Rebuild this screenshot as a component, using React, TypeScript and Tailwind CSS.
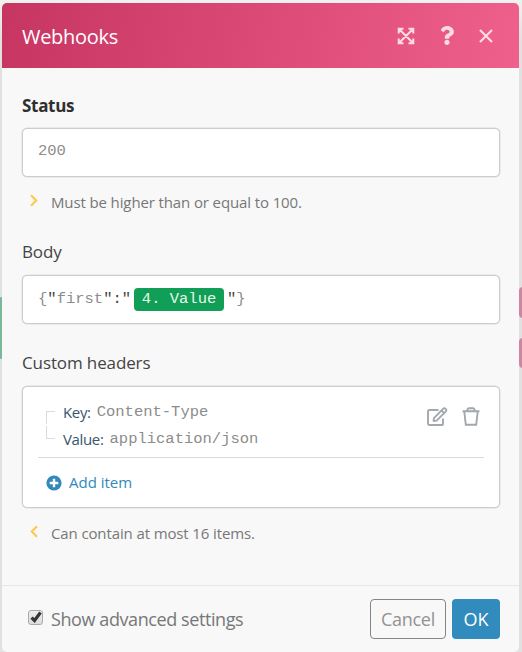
import type { ReactNode } from 'react';
import { FaQuestion } from 'react-icons/fa';

const box = 'rounded-[5px] border border-[#cdcdcd] bg-white shadow-[0_0_0_0.5px_#dcdcdc]';
const mono = "font-['Liberation_Mono','Courier_New',monospace] text-[15.5px] text-[#8c8c8c]";

function ExpandIcon() {
  return (
    <svg width="18" height="18" viewBox="0 0 18 18" fill="none" stroke="currentColor" strokeWidth="2">
      <path d="M1.700 6.500V1.700h4.800M11.500 1.700h4.800v4.800M16.300 11.500v4.800h-4.800M6.500 16.300H1.700v-4.800M2 2l14 14M16 2L2 16" />
      <path fill="currentColor" stroke="none" d="M1 1h5L1 6zM17 1v5l-5-5zM17 17h-5l5-5zM1 17v-5l5 5z" />
    </svg>
  );
}

function CloseIcon() {
  return (
    <svg width="14" height="14" viewBox="0 0 14 14" fill="none" stroke="currentColor" strokeWidth="2.200">
      <path d="M1 1l12 12M13 1L1 13" />
    </svg>
  );
}

function EditIcon() {
  return (
    <svg width="21" height="19" viewBox="0 0 21 19" fill="none" stroke="#a3a8ae" strokeWidth="1.900" strokeLinejoin="round">
      <path d="M11.500 3H2.200Q1 3 1 4.200v12.600Q1 18 2.200 18h13Q16 18 16 17v-5.500" />
      <path d="M7 11.200l9-9.300q1.300-1.200 2.700 0 1.300 1.400 0 2.700l-9.100 9L6.500 14zM14.500 3.500l2.700 2.700" />
    </svg>
  );
}

function TrashIcon() {
  return (
    <svg width="18" height="19" viewBox="0 0 18 19" fill="none" stroke="#a3a8ae" strokeWidth="1.900" strokeLinejoin="round">
      <path d="M0.500 4.200h17M5.200 4q0.200-2.800 1.700-2.800h4.200q1.500 0 1.700 2.800M2.300 4.500l1.500 13.300h10.400l1.500-13.300" />
    </svg>
  );
}

function Chevron({ left = false }: { left?: boolean }) {
  return (
    <svg width="8" height="13" viewBox="0 0 8 13" fill="none" stroke="#fdc94f" strokeWidth="2.200">
      <path d={left ? 'M7 1.200L1.800 6.500 7 11.800' : 'M1 1.200l5.200 5.300L1 11.800'} />
    </svg>
  );
}

function Help({ children, left = false }: { children: ReactNode; left?: boolean }) {
  return (
    <div className="flex h-[22px] pl-2">
      <div className="w-[21px] pt-[3px]"><Chevron left={left} /></div>
      <span className="text-[15px] leading-[22px] tracking-[-0.12px] text-[#777]">{children}</span>
    </div>
  );
}

export default function App() {
  return (
    <div className="relative h-[652px] w-[522px] overflow-hidden bg-[#e1e1e1] font-['Open_Sans','Noto_Sans',sans-serif]">
      <div className="absolute inset-x-0 top-0 h-10 bg-linear-to-b from-[#f1f1f1] to-[#e1e1e1]" />
      <div className="absolute left-0 top-[297px] h-[62px] w-[3px] rounded-r-sm bg-[#7bb798]" />
      <div className="absolute left-[519px] top-[287px] h-[31px] w-[6px] rounded-l bg-[#cc86a0]" />
      <div className="absolute left-[519px] top-[338px] h-[30px] w-[6px] rounded-l bg-[#cc86a0]" />

      <div className="relative ml-[2px] flex h-[652px] w-[517px] flex-col pt-[3px]">
        <header className="flex h-[65px] shrink-0 items-center rounded-t-[5px] bg-linear-[100deg,#c73562,#f0608c] pl-5 text-white">
          <h1 className="flex-1 pt-0.5 text-[20px] tracking-[-0.3px]">Webhooks</h1>
          <div className="flex items-center text-[#fcdbe5]">
            <ExpandIcon />
            <FaQuestion className="ml-[23px] h-[19px] w-[18px]" />
            <div className="ml-[23px] mr-[26px]"><CloseIcon /></div>
          </div>
        </header>

        <main className="h-[517px] shrink-0 bg-[#f8f8f8] pl-5 pr-[19.500px] pt-6">
          <h2 className="h-9 pt-px text-[17px] font-bold leading-[26px] tracking-[-0.3px] text-[#2f2f2f]">Status</h2>
          <div className={`${box} ${mono} h-[49px] px-[15px] pt-[10px] leading-[24px]`}>200</div>
          <div className="pt-[14px]"><Help>Must be higher than or equal to 100.</Help></div>

          <h2 className="mt-[26px] h-9 text-[17px] leading-[26px] tracking-[-0.15px] text-[#444]">Body</h2>
          <div className={`${box} ${mono} flex h-[49px] items-center px-[15px]`}>
            <span>{'{'}<b className="font-normal text-[#444]">"</b>first<b className="font-normal text-[#444]">":"</b></span>
            <span className="mx-[3px] flex h-[23px] w-[90px] items-center justify-center rounded bg-[#119f57] text-[#e4f7ec]">4. Value</span>
            <span><b className="font-normal text-[#444]">"</b>{'}'}</span>
          </div>

          <h2 className="mt-[26px] h-9 text-[17px] leading-[26px] tracking-[-0.12px] text-[#444]">Custom headers</h2>
          <div className={`${box} h-[122px] px-[15px] pt-[12px]`}>
            <div className="flex h-[59px] border-b border-[#d9d9d9]">
              <div className="mt-[12px] flex w-[25px] flex-col gap-[2px] pl-2">
                <div className="h-[13px] w-[9px] border-l border-t border-[#d7dbe3]" />
                <div className="h-[13px] w-[9px] border-b border-l border-[#d7dbe3]" />
              </div>
              <div className="flex-1 text-[15px] leading-[27px] tracking-[-0.35px] text-[#36566e]">
                <div className="flex gap-[6px]">Key: <span className={`${mono} tracking-normal`}>Content-Type</span></div>
                <div className="flex gap-[6px]">Value: <span className={`${mono} tracking-normal`}>application/json</span></div>
              </div>
              <div className="flex gap-[14px] pr-[4px] pt-[8px]"><EditIcon /><TrashIcon /></div>
            </div>
            <div className="flex h-[49px] items-center gap-[7px] pl-2 text-[15px] text-[#3089b9]">
              <svg width="16" height="16" viewBox="0 0 16 16">
                <circle cx="8" cy="8" r="7.600" fill="#3089b9" />
                <path d="M8 3.700v8.600M3.700 8h8.600" stroke="white" strokeWidth="2.400" />
              </svg>
              <span>Add item</span>
            </div>
          </div>
          <div className="pt-[14px]"><Help left>Can contain at most 16 items.</Help></div>
        </main>

        <footer className="flex h-[67px] shrink-0 items-center rounded-b-[5px] border-t border-[#e7e7e7] bg-[#f8f8f8] pb-px pl-[26px] pr-[19px]">
          <div className="mb-[3px] mr-2 flex size-[15px] items-center justify-center rounded-[3px] border border-[#aaa] bg-linear-to-b from-[#eee] to-[#ddd]">
            <svg width="12" height="12" viewBox="0 0 12 12" fill="none" stroke="#363636" strokeWidth="3.200">
              <path d="M1.500 6.700l3 2.800L10.500 1.500" />
            </svg>
          </div>
          <span className="flex-1 pt-0.5 text-[18px] tracking-[-0.41px] text-[#777]">Show advanced settings</span>
          <button className="h-[40px] w-[76px] rounded-[4px] border border-[#858585] pt-0.5 text-[18px] tracking-[-0.3px] text-[#929292]">Cancel</button>
          <button className="ml-[6px] h-[40px] w-[48px] rounded-[4px] bg-[#318bbc] pt-0.5 text-[18px] text-white">OK</button>
        </footer>
      </div>
    </div>
  );
}
